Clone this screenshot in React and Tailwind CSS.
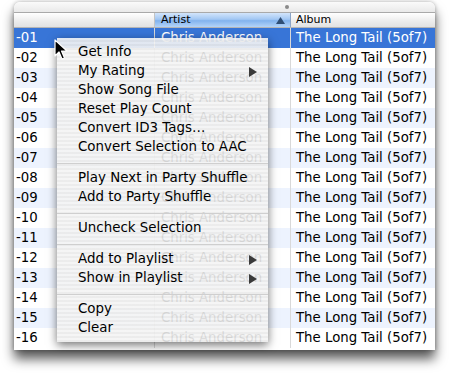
import React from "react";

const rows = Array.from({ length: 16 }, (_, i) => String(i + 1).padStart(2, "0"));

function Arrow() {
  return (
    <svg width="8" height="10" viewBox="0 0 8 10" className="block">
      <path d="M0 0 L8 5 L0 10 Z" fill="#3a3a3a" />
    </svg>
  );
}

function Item({ label, sub }) {
  return (
    <div className="h-[19px] flex items-center justify-between pl-[21px] pr-[11px] text-black">
      <span>{label}</span>
      {sub ? <Arrow /> : null}
    </div>
  );
}

function Sep() {
  return (
    <div className="h-[12px] flex items-center">
      <div className="h-px w-full bg-[#cfcfcf]" />
    </div>
  );
}

export default function App() {
  return (
    <div
      className="relative w-[449px] h-[375px] bg-white overflow-hidden"
      style={{ fontFamily: '"DejaVu Sans", "Liberation Sans", sans-serif' }}
    >
      <div className="pl-[14px] pt-[2px]">
        <div className="w-[421px] h-[348px] rounded-t-[6px] overflow-hidden bg-white shadow-[0_9px_12px_rgba(0,0,0,0.65),0_0_4px_rgba(0,0,0,0.3)] flex flex-col">
          {/* top strip */}
          <div className="relative h-[11px] bg-[linear-gradient(to_bottom,#fafafa,#e9e9e9)] border-b border-[#a9a9a9]">
            <div className="absolute left-[271px] top-[3px] w-[4px] h-[4px] rounded-full bg-[#8a8a8a]" />
          </div>
          {/* header */}
          <div className="h-[15px] flex text-[11px] leading-[14px] text-black bg-[linear-gradient(to_bottom,#ffffff,#ececec_60%,#e2e2e2)] border-b border-[#b5b5b5]">
            <div className="w-[141px] border-r border-[#c4c4c4]" />
            <div className="w-[136px] flex items-center justify-between pl-[6px] pr-[5px] border-r border-[#8aa4c8] bg-[linear-gradient(to_bottom,#d3e5fb,#a2c7f3_45%,#82b3ee_55%,#b4d4f8)]">
              <span>Artist</span>
              <svg width="9" height="7" viewBox="0 0 9 7"><path d="M4.5 0 L9 7 L0 7 Z" fill="#2f4e75" /></svg>
            </div>
            <div className="flex-1 pl-[5px] flex items-center">Album</div>
          </div>
          {/* rows */}
          <div className="flex-1 text-[13.3px]">
            {rows.map((n, i) => {
              const sel = i === 0;
              const bg = sel ? "bg-[#3875d7] text-white" : i % 2 === 1 ? "bg-white text-black" : "bg-[#edf3fe] text-black";
              return (
                <div key={n} className={`h-[20px] flex items-center whitespace-nowrap ${bg}`}>
                  <div className="w-[141px] h-full flex items-center pl-[2px] border-r border-[#d9d9d9]">-{n}</div>
                  <div className="w-[136px] h-full flex items-center pl-[6px] border-r border-[#d9d9d9]">Chris Anderson</div>
                  <div className="flex-1 h-full flex items-center pl-[5px]">The Long Tail (5of7)</div>
                </div>
              );
            })}
          </div>
        </div>
      </div>

      {/* context menu */}
      <div className="absolute left-[57px] top-[38px] w-[211px] pt-[5px] pb-[4px] text-[13.4px] bg-[repeating-linear-gradient(to_bottom,rgba(244,244,244,0.9)_0px,rgba(244,244,244,0.9)_2px,rgba(234,234,234,0.9)_2px,rgba(234,234,234,0.9)_4px)] shadow-[0_3px_9px_rgba(0,0,0,0.55)]">
        <Item label="Get Info" />
        <Item label="My Rating" sub />
        <Item label="Show Song File" />
        <Item label="Reset Play Count" />
        <Item label="Convert ID3 Tags…" />
        <Item label="Convert Selection to AAC" />
        <Sep />
        <Item label="Play Next in Party Shuffle" />
        <Item label="Add to Party Shuffle" />
        <Sep />
        <Item label="Uncheck Selection" />
        <Sep />
        <Item label="Add to Playlist" sub />
        <Item label="Show in Playlist" sub />
        <Sep />
        <Item label="Copy" />
        <Item label="Clear" />
      </div>

      {/* cursor */}
      <svg className="absolute left-[54px] top-[39px]" width="14" height="22" viewBox="0 0 14 22">
        <path d="M1 1 L1 17 L5 13 L8 20 L10.5 19 L7.5 12 L13 12 Z" fill="#000" stroke="#fff" strokeWidth="1.2" strokeLinejoin="round" />
      </svg>
    </div>
  );
}
